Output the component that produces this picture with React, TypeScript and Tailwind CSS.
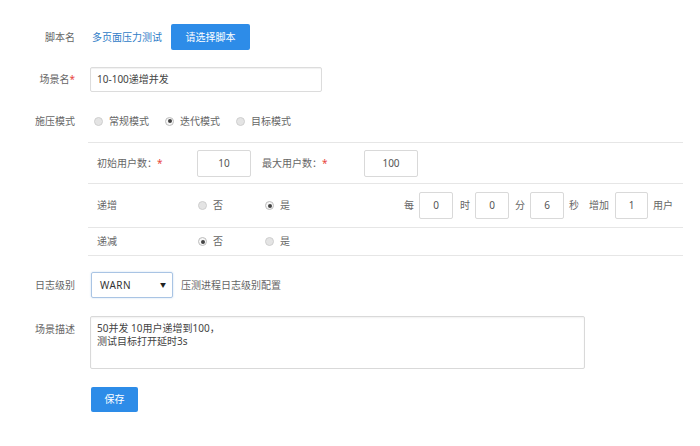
import React from 'react';

function Radio({ checked }: { checked?: boolean }) {
    if (checked) {
        return (
            <span className="flex items-center justify-center w-[9px] h-[9px] rounded-full border border-[#bdbdbd] bg-[#f7f7f7]">
                <span className="w-[4px] h-[4px] rounded-full bg-[#444]" />
            </span>
        );
    }
    return <span className="w-[9px] h-[9px] rounded-full border border-[#cfcfcf] bg-[#e4e4e4]" />;
}

function RadioItem({ checked, label }: { checked?: boolean; label: string }) {
    return (
        <label className="flex items-center gap-[6px]">
            <Radio checked={checked} />
            <span>{label}</span>
        </label>
    );
}

function Box({ value, w }: { value: string; w: string }) {
    return (
        <div className={`${w} h-[27px] border border-[#d9d9d9] rounded-[2px] flex items-center justify-center text-[#555]`}>
            {value}
        </div>
    );
}

function Label({ children }: { children: React.ReactNode }) {
    return <div className="w-[75px] text-right text-[#666] shrink-0">{children}</div>;
}

export default function App() {
    return (
        <div className="w-[700px] h-[446px] bg-white text-[10px] text-[#666] font-['Noto_Sans','Noto_Sans_CJK_SC',sans-serif] pt-[24px]">
            <div className="flex items-center h-[26px]">
                <Label>脚本名</Label>
                <span className="ml-[17px] text-[#2f7cc7]">多页面压力测试</span>
                <button className="ml-[9px] w-[79px] h-[26px] rounded-[2px] bg-[#2d8ce8] text-white">请选择脚本</button>
            </div>

            <div className="flex items-center h-[25px] mt-[17px]">
                <Label>
                    场景名<span className="text-[#e8473d]">*</span>
                </Label>
                <div className="ml-[15px] w-[232px] h-[25px] border border-[#dcdcdc] rounded-[2px] shadow-[inset_0_1px_1px_rgba(0,0,0,0.06)] flex items-center pl-[6px] text-[#444]">
                    10-100递增并发
                </div>
            </div>

            <div className="flex items-center h-[20px] mt-[19px]">
                <Label>施压模式</Label>
                <div className="ml-[19px] flex items-center gap-[16px]">
                    <RadioItem label="常规模式" />
                    <RadioItem checked label="迭代模式" />
                    <RadioItem label="目标模式" />
                </div>
            </div>

            <div className="ml-[88px] w-[595px] mt-[11px] border-t border-[#e6e6e6]">
                <div className="flex items-center h-[41px] border-b border-[#e6e6e6] pl-[9px]">
                    <div className="w-[100px]">
                        初始用户数：<span className="text-[#e8473d]">*</span>
                    </div>
                    <Box value="10" w="w-[54px]" />
                    <div className="ml-[11px] w-[102px]">
                        最大用户数：<span className="text-[#e8473d]">*</span>
                    </div>
                    <Box value="100" w="w-[54px]" />
                </div>

                <div className="flex items-center h-[44px] border-b border-[#e6e6e6] pl-[9px] pr-[10px]">
                    <div className="w-[101px]">递增</div>
                    <div className="w-[67px]">
                        <RadioItem label="否" />
                    </div>
                    <RadioItem checked label="是" />
                    <div className="ml-auto flex items-center">
                        <span>每</span>
                        <div className="ml-[5px]"><Box value="0" w="w-[34px]" /></div>
                        <span className="ml-[7px]">时</span>
                        <div className="ml-[5px]"><Box value="0" w="w-[34px]" /></div>
                        <span className="ml-[6px]">分</span>
                        <div className="ml-[5px]"><Box value="6" w="w-[34px]" /></div>
                        <span className="ml-[5px]">秒</span>
                        <span className="ml-[10px]">增加</span>
                        <div className="ml-[6px]"><Box value="1" w="w-[33px]" /></div>
                        <span className="ml-[5px]">用户</span>
                    </div>
                </div>

                <div className="flex items-center h-[28px] border-b border-[#e6e6e6] pl-[9px]">
                    <div className="w-[101px]">递减</div>
                    <div className="w-[67px]">
                        <RadioItem checked label="否" />
                    </div>
                    <RadioItem label="是" />
                </div>
            </div>

            <div className="flex items-center h-[26px] mt-[16px]">
                <Label>日志级别</Label>
                <div className="ml-[16px] w-[82px] h-[26px] border border-[#a9c4e4] rounded-[2px] shadow-[0_0_2px_rgba(80,140,210,0.35)] flex items-center justify-between pl-[8px] pr-[6px] text-[#333]">
                    <span className="tracking-[0.5px]">WARN</span>
                    <span className="text-[6px] text-[#222]">▼</span>
                </div>
                <span className="ml-[8px]">压测进程日志级别配置</span>
            </div>

            <div className="flex items-start mt-[18px]">
                <div className="w-[75px] text-right shrink-0 mt-[6px]">场景描述</div>
                <div className="ml-[15px] w-[495px] h-[53px] border border-[#d9d9d9] rounded-[2px] shadow-[inset_0_1px_2px_rgba(0,0,0,0.06)] pl-[6px] pt-[5px] leading-[13px] text-[#444]">
                    <div>50并发 10用户递增到100，</div>
                    <div>测试目标打开延时3s</div>
                </div>
            </div>

            <div className="ml-[91px] mt-[18px]">
                <button className="w-[47px] h-[25px] rounded-[2px] bg-[#2d8ce8] text-white">保存</button>
            </div>
        </div>
    );
}
